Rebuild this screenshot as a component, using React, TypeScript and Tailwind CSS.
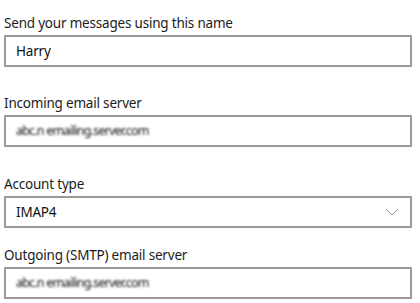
import { ReactNode } from "react";

function Field({ label, children, className = "" }: { label: string; children: ReactNode; className?: string }) {
  return (
    <div className={className}>
      <div className="h-[21px] text-[13.5px] leading-[21px] tracking-[-0.2px] text-[#1b1b1b]">{label}</div>
      <div className="mt-[1px] flex h-[32px] items-center border-2 border-[#999999] bg-white pl-[10px] pr-[10px] text-[13.5px] tracking-[-0.2px] text-[#111]">
        {children}
      </div>
    </div>
  );
}

export default function App() {
  return (
    <div
      className="h-[303px] w-[420px] overflow-hidden bg-white pl-[4px] pr-[8px] pt-[13px]"
      style={{ fontFamily: '"Noto Sans", "Open Sans", sans-serif' }}
    >
      <Field label="Send your messages using this name" className="mb-[26px]">
        <span>Harry</span>
      </Field>

      <Field label="Incoming email server" className="mb-[27px]">
        {/* server address is blurred in the original */}
        <span className="text-[12.5px] tracking-[-0.8px] text-[#111] blur-[0.9px]">abc.n emailing.server.com</span>
      </Field>

      <Field label="Account type" className="mb-[17px]">
        <span className="flex-1">IMAP4</span>
        <svg width="14" height="8" viewBox="0 0 14 8" className="mr-[1px]">
          <path d="M1 1 L7 7 L13 1" fill="none" stroke="#9a9a9a" strokeWidth="1" />
        </svg>
      </Field>

      <Field label="Outgoing (SMTP) email server">
        <span className="text-[12.5px] tracking-[-0.8px] text-[#111] blur-[0.9px]">abc.n emailing.server.com</span>
      </Field>
    </div>
  );
}
